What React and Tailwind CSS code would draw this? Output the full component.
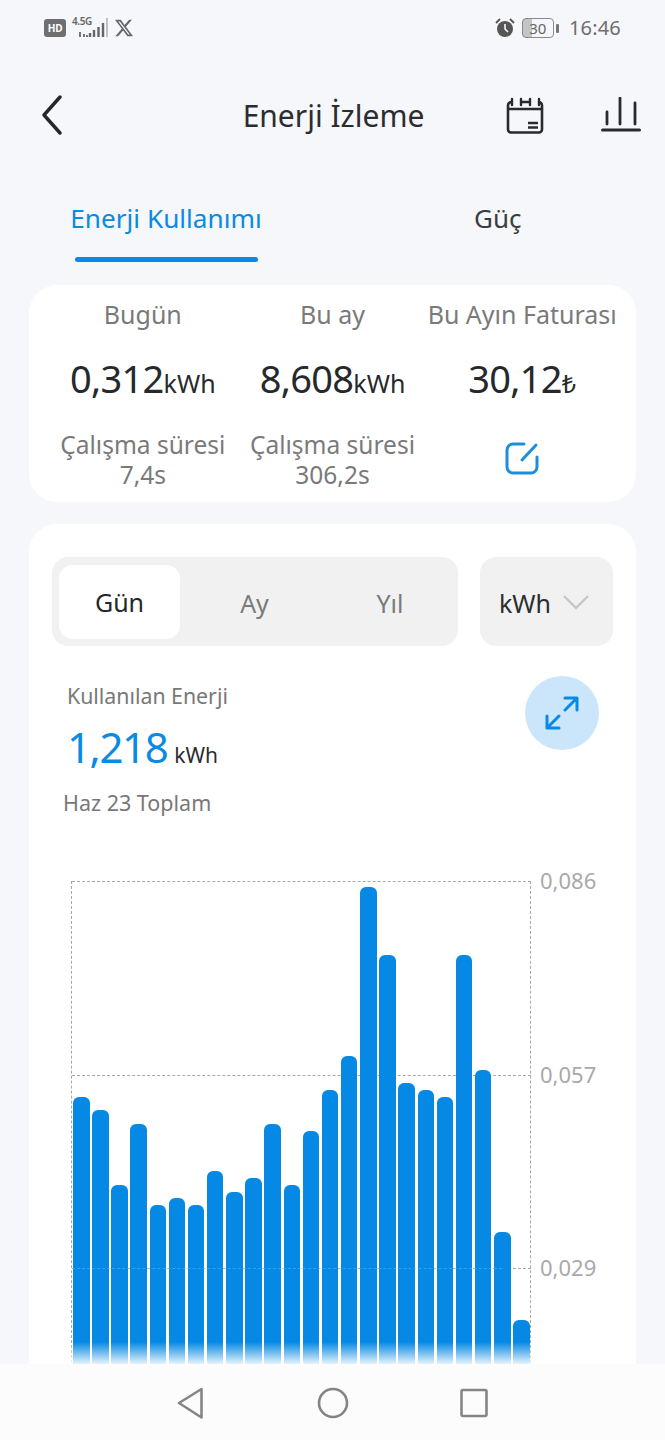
const tops = [1097,1110,1185,1124,1205,1198,1205,1171,1192,1178,1124,1185,1131,1090,1056,887,955,1083,1090,1097,955,1070,1232,1320];
const CHART_BOTTOM = 1373;

function Stat({ label, value, unit, sub, subValue, icon }) {
  return (
    <div className="flex flex-col items-center">
      <div className="h-[30px] text-[25px] leading-[30px] text-[#7a7a7a] whitespace-nowrap">{label}</div>
      <div className="mt-[24px] h-[50px] flex items-baseline justify-center leading-[50px] text-[#26292b] whitespace-nowrap">
        <span className="text-[38px] tracking-[-0.7px]">{value}</span>
        <span className="text-[25px]">{unit}</span>
      </div>
      {icon ? (
        <div className="mt-[26px] h-[58px] flex items-center justify-center">{icon}</div>
      ) : (
        <div className="mt-[27px] h-[57px] text-center text-[24.5px] leading-[30px] text-[#7a7a7a] whitespace-nowrap">
          <div>{sub}</div>
          <div>{subValue}</div>
        </div>
      )}
    </div>
  );
}

function GridLine({ top, label }) {
  return (
    <div className="absolute left-0 w-[459px] border-t border-dashed border-[#a8a8a8]" style={{ top }}>
      <span className="absolute left-[468px] top-[-16px] text-[22px] leading-[28px] text-[#a9a9a9]">{label}</span>
    </div>
  );
}

export default function App() {
  return (
    <div className="relative h-[1440px] w-[665px] overflow-hidden bg-[#f5f7fb] font-['Noto_Sans','Inter',sans-serif]">
      {/* status bar */}
      <div className="flex h-[56px] items-center justify-between pl-[44px] pr-[44px]">
        <div className="flex items-center">
          <div className="flex h-[18px] w-[22px] items-center justify-center rounded-[3px] bg-[#6f6f6f] text-[10px] font-bold leading-none tracking-[-0.3px] text-white">HD</div>
          <div className="relative ml-[5px] h-[20px] w-[37px]">
            <span className="absolute left-[1px] top-[-3px] text-[10px] font-semibold leading-[12px] tracking-[-0.4px] text-[#666]">4.5G</span>
            <svg width="37" height="20" viewBox="0 0 37 20" className="absolute left-0 top-0">
              <path d="M9 14v5M13 16v3M16 17v2" stroke="#666" strokeWidth="1.8" fill="none" />
              <path d="M19 19v-4M23 19v-7M27.500 19v-10M32 19V5" stroke="#666" strokeWidth="2.4" fill="none" />
              <path d="M36 19V0" stroke="#bbb" strokeWidth="1.8" />
            </svg>
          </div>
          <svg width="18" height="18" viewBox="0 0 24 24" className="ml-[7px]">
            <path d="M18.901 1.153h3.68l-8.04 9.19L24 22.846h-7.406l-5.8-7.584-6.638 7.584H.474l8.6-9.83L0 1.154h7.594l5.243 6.932ZM17.61 20.644h2.039L6.486 3.24H4.298Z" fill="#666" />
          </svg>
        </div>
        <div className="flex items-center">
          <svg width="22" height="22" viewBox="0 0 22 22">
            <circle cx="11" cy="12" r="8" fill="#555" />
            <path d="M11 7v5l3 3" stroke="#f5f7fb" strokeWidth="1.6" fill="none" />
            <path d="M2 6l4-4M20 6l-4-4" stroke="#555" strokeWidth="1.8" />
          </svg>
          <div className="relative ml-[6px] flex h-[20px] w-[32px] items-center justify-center rounded-[4px] border-[1.5px] border-[#8a8a8a] bg-[linear-gradient(90deg,#c4c4c4_30%,transparent_30%)] text-[15px] leading-none text-[#666]">30</div>
          <div className="ml-[2px] h-[9px] w-[3px] rounded-[1px] bg-[#777]" />
          <div className="ml-[10px] text-[20px] leading-none tracking-[0.2px] text-[#6e6e6e]">16:46</div>
        </div>
      </div>

      {/* header */}
      <div className="relative mt-[36px] flex h-[48px] items-center justify-center">
        <svg width="24" height="40" viewBox="0 0 24 40" className="absolute left-[40px] top-[3px]">
          <path d="M20 3 4 21l16 18" transform="translate(0 -1)" stroke="#24282b" strokeWidth="3.4" fill="none" strokeLinecap="round" strokeLinejoin="round" />
        </svg>
        <h1 className="pl-[2px] text-[30px] font-normal leading-[48px] text-[#2a2d30]">Enerji İzleme</h1>
        <svg width="38" height="38" viewBox="0 0 38 38" className="absolute left-[506px] top-[5px]">
          <path d="M6 5H5.500a3.500 3.500 0 0 0-3.500 3.500v24a3 3 0 0 0 3 3h28a3 3 0 0 0 3-3v-24a3.500 3.500 0 0 0-3.500-3.500H33M15 5h9M2 12h34" stroke="#282b2e" strokeWidth="2.6" fill="none" />
          <path d="M6 2v6M15 2v6M24 2v6M33 2v6" stroke="#282b2e" strokeWidth="2.4" strokeLinecap="round" />
          <path d="M22 26h10M22 30.500h10" stroke="#282b2e" strokeWidth="2.4" />
        </svg>
        <svg width="40" height="36" viewBox="0 0 40 36" className="absolute left-[601px] top-[5px]">
          <path d="M6 15v12M19 1v26M34 6v21" stroke="#282b2e" strokeWidth="2.8" fill="none" strokeLinecap="round" />
          <path d="M1.500 33h37" stroke="#282b2e" strokeWidth="3" strokeLinecap="round" />
        </svg>
      </div>

      {/* tabs */}
      <div className="mt-[60px] flex h-[85px] pl-[70px]">
        <div className="flex h-[62px] w-[192px] flex-col items-center">
          <div className="text-[26.200px] leading-[36px] text-[#0a8ae2] whitespace-nowrap">Enerji Kullanımı</div>
          <div className="mt-[21px] h-[5px] w-[183px] rounded-full bg-[#0a8ae2]" />
        </div>
        <div className="ml-[212px] text-[26px] leading-[36px] text-[#3a3d40]">Güç</div>
      </div>

      {/* summary card */}
      <div className="mx-[29px] h-[217px] rounded-[28px] bg-white pl-[19px] pr-[19px] pt-[14px]">
        <div className="grid grid-cols-3">
          <Stat label="Bugün" value="0,312" unit="kWh" sub="Çalışma süresi" subValue="7,4s" />
          <Stat label="Bu ay" value="8,608" unit="kWh" sub="Çalışma süresi" subValue="306,2s" />
          <Stat
            label="Bu Ayın Faturası"
            value="30,12"
            unit="₺"
            icon={
              <svg width="34" height="34" viewBox="0 0 34 34">
                <path d="M19 3H8a6 6 0 0 0-6 6v17a6 6 0 0 0 6 6h18a6 6 0 0 0 6-6V16" stroke="#1b8fdf" strokeWidth="3" fill="none" strokeLinecap="round" />
                <path d="M17 19 31 4" stroke="#1b8fdf" strokeWidth="3" strokeLinecap="round" />
              </svg>
            }
          />
        </div>
      </div>

      {/* detail card */}
      <div className="mx-[29px] mt-[22px] h-[920px] rounded-t-[28px] bg-white pl-[23px] pr-[23px] pt-[33px]">
        <div className="flex justify-between">
          <div className="grid h-[89px] w-[406px] grid-cols-[135px_135px_136px] items-center rounded-[16px] bg-[#f1f1f1] text-center text-[25px] text-[#7b7b7b]">
            <div className="ml-[7px] flex h-[74px] w-[121px] items-center justify-center rounded-[14px] bg-white pt-[2px] text-[#25282a]">Gün</div>
            <div className="pt-[4px]">Ay</div>
            <div className="pt-[4px]">Yıl</div>
          </div>
          <div className="flex h-[89px] w-[133px] items-center rounded-[16px] bg-[#f1f1f1] pl-[19px] pt-[4px] text-[25px] text-[#2a2d30]">
            kWh
            <svg width="28" height="16" viewBox="0 0 28 16" className="ml-[11px] mt-[-4px]">
              <path d="M2 2l12 12L26 2" stroke="#c4c4c4" strokeWidth="2.2" fill="none" />
            </svg>
          </div>
        </div>

        <div className="relative mt-[35px] h-[136px]">
          <div className="ml-[15px] text-[21.300px] leading-[30px] text-[#787878]">Kullanılan Enerji</div>
          <div className="ml-[15px] mt-[6px] flex h-[60px] items-baseline leading-[60px]">
            <span className="text-[42px] tracking-[-1.4px] text-[#0a8ae2]">1,218</span>
            <span className="ml-[7px] text-[21px] text-[#2a2d30]">kWh</span>
          </div>
          <div className="ml-[11px] mt-[11px] text-[21.500px] leading-[30px] text-[#787878]">Haz 23 Toplam</div>
          <div className="absolute left-[473px] top-[-5px] flex h-[74px] w-[74px] items-center justify-center rounded-full bg-[#cbe6fa]">
            <svg width="36" height="36" viewBox="0 0 36 36">
              <path d="M21 15 33 3M21 3h12v12M15 21 3 33M3 21v12h12" stroke="#0a8ae2" strokeWidth="3" fill="none" strokeLinecap="round" strokeLinejoin="round" />
            </svg>
          </div>
        </div>

        {/* chart */}
        <div className="relative ml-[19px] mt-[64px] h-[492px] border-l border-dashed border-[#a8a8a8]">
          <GridLine top={0} label="0,086" />
          <GridLine top={194} label="0,057" />
          <GridLine top={387} label="0,029" />
          <div className="absolute left-[458px] top-0 h-full border-l border-dashed border-[#a8a8a8]" />
          <div className="flex h-full w-[458px] items-end justify-between pl-[1px]">
            {tops.map((t, i) => (
              <div key={i} className="relative w-[16.5px] rounded-t-[6px] bg-[#0689e4]" style={{ height: CHART_BOTTOM - t }} />
            ))}
          </div>
          <div className="absolute left-0 top-[387px] w-[430px] border-t border-dashed border-white/20" />
        </div>
      </div>

      {/* bottom fade */}
      <div className="absolute bottom-[76px] left-[29px] h-[22px] w-[607px] bg-gradient-to-b from-white/0 to-white/90" />

      {/* nav bar */}
      <div className="absolute bottom-0 left-0 flex h-[76px] w-full items-start bg-[#fcfcfc] pl-[176px] pt-[23px]">
        <svg width="30" height="32" viewBox="0 0 30 32">
          <path d="M25.500 2 3 16l22.500 14.500z" stroke="#858585" strokeWidth="2.6" fill="none" strokeLinejoin="round" />
        </svg>
        <svg width="32" height="32" viewBox="0 0 32 32" className="ml-[111px]">
          <circle cx="16" cy="16" r="14" stroke="#858585" strokeWidth="2.6" fill="none" />
        </svg>
        <svg width="30" height="32" viewBox="0 0 30 32" className="ml-[110px]">
          <rect x="2.500" y="3" width="25" height="26" rx="1.500" stroke="#858585" strokeWidth="2.6" fill="none" />
        </svg>
      </div>
    </div>
  );
}
